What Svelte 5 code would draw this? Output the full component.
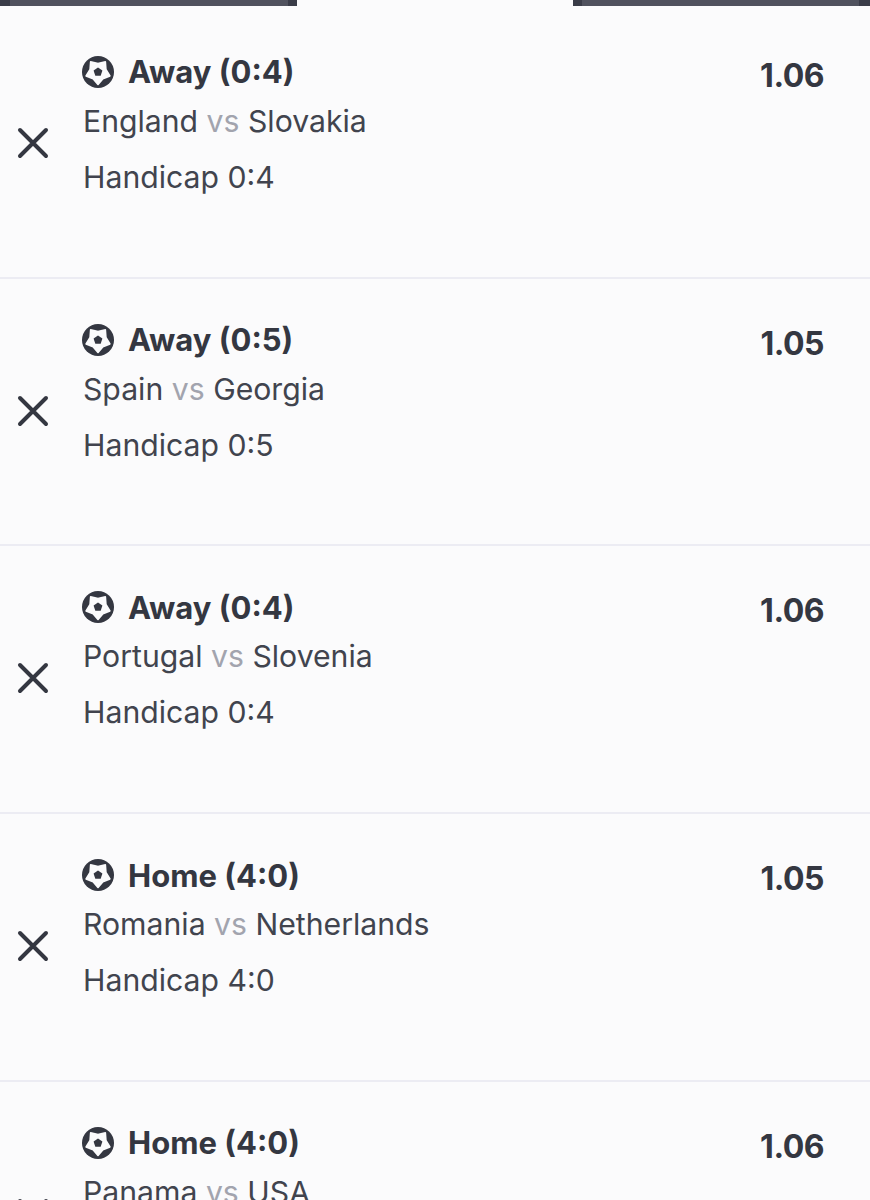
<script lang="ts">
  const bets = [
    { pick: 'Away (0:4)', home: 'England', away: 'Slovakia', market: 'Handicap 0:4', odds: '1.06' },
    { pick: 'Away (0:5)', home: 'Spain', away: 'Georgia', market: 'Handicap 0:5', odds: '1.05' },
    { pick: 'Away (0:4)', home: 'Portugal', away: 'Slovenia', market: 'Handicap 0:4', odds: '1.06' },
    { pick: 'Home (4:0)', home: 'Romania', away: 'Netherlands', market: 'Handicap 4:0', odds: '1.05' },
    { pick: 'Home (4:0)', home: 'Panama', away: 'USA', market: 'Handicap 4:0', odds: '1.06' }
  ];
</script>

<div class="page">
  <div class="tabs">
    <span class="tab"></span>
    <span class="tab"></span>
  </div>

  {#each bets as bet}
    <section class="bet">
      <div class="status">
        <svg width="34" height="34" viewBox="0 0 34 34" aria-hidden="true">
          <path d="M4 4 L30 30 M30 4 L4 30" fill="none" stroke="#343741" stroke-width="4" stroke-linecap="round" />
        </svg>
      </div>
      <div class="info">
        <div class="pick">
          <svg class="ball" width="32" height="32" viewBox="0 0 32 32" aria-hidden="true">
            <circle cx="16" cy="16" r="16" fill="#343741" />
            <polygon
              points="16,7.5 23.35,5.9 23.9,13.4 27.9,19.9 20.9,22.8 16,28.5 11.1,22.8 4.1,19.9 8.1,13.4 8.65,5.9"
              fill="#fbfbfc"
              stroke="#fbfbfc"
              stroke-width="1.6"
              stroke-linejoin="round"
            />
            <polygon points="16,11.4 20.4,14.6 18.7,19.7 13.3,19.7 11.6,14.6" fill="#343741" />
          </svg>
          <span>{bet.pick}</span>
        </div>
        <div class="match">{bet.home} <span class="vs">vs</span> {bet.away}</div>
        <div class="market">{bet.market}</div>
      </div>
      <div class="odds">{bet.odds}</div>
    </section>
  {/each}
</div>

<style>
  :global(body) {
    background: #fbfbfc;
  }
  .page {
    height: 1200px;
    overflow: hidden;
    font-family: Inter, "Liberation Sans", sans-serif;
    color: #343741;
  }
  .tabs {
    display: flex;
    justify-content: space-between;
    height: 6px;
    margin-bottom: 4.75px;
  }
  .tab {
    width: 297px;
    background: #50525e;
    border-left: 10px solid #3a3c48;
    border-right: 9px solid #3a3c48;
    box-sizing: border-box;
  }
  .tab:last-child {
    border-left-width: 9px;
    border-right-width: 11px;
  }
  .bet {
    display: flex;
    height: 267.75px;
    box-sizing: border-box;
    border-bottom: 2px solid #ececf3;
    padding: 0 46px 0 16px;
  }
  .status {
    width: 66px;
    flex: none;
    padding-top: 115px;
  }
  .info {
    flex: 1;
    padding-top: 42px;
  }
  .pick {
    display: flex;
    align-items: center;
    gap: 14px;
    height: 38px;
    font-size: 31px;
    font-weight: 700;
  }
  .match {
    margin: 11px 0 0 1px;
    font-size: 30.2px;
    line-height: 38px;
    font-weight: 400;
    color: #41444e;
  }
  .vs {
    color: #a2a4ae;
  }
  .market {
    margin: 18px 0 0 1px;
    font-size: 30.2px;
    line-height: 38px;
    color: #41444e;
  }
  .odds {
    padding-top: 46px;
    font-size: 32px;
    line-height: 38px;
    font-weight: 700;
    letter-spacing: -0.5px;
  }
</style>
